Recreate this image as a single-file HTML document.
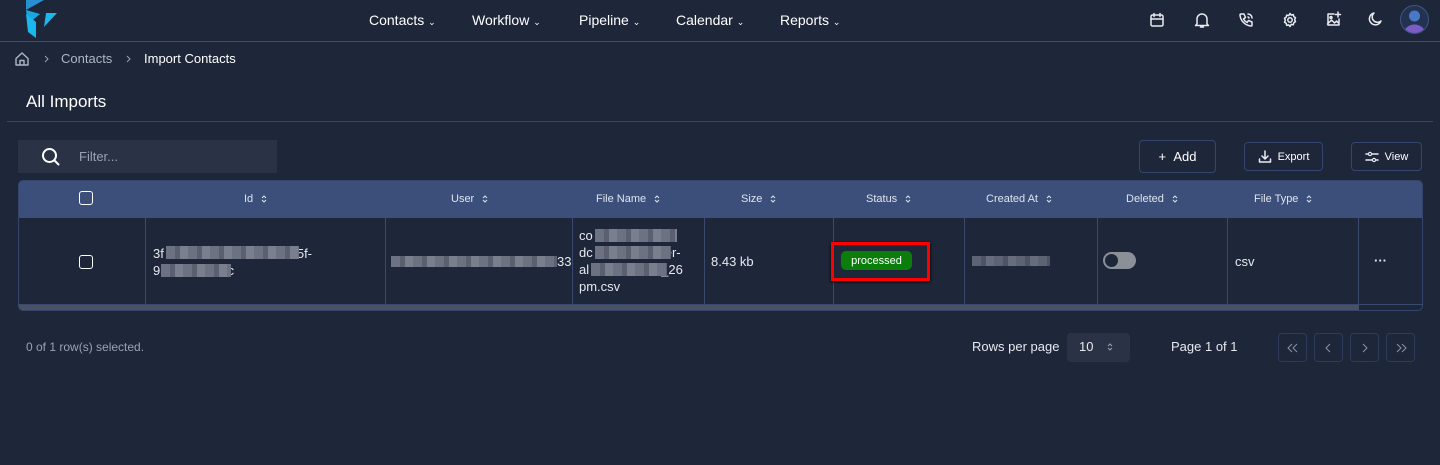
<!DOCTYPE html>
<html><head><style>
*{box-sizing:border-box;margin:0;padding:0}
body{width:1440px;height:465px;background:#1e2639;font-family:"Liberation Sans",sans-serif;color:#e6e9ef;position:relative;overflow:hidden;font-size:13px}
.a{position:absolute}
.nav{font-size:14px;color:#fff}
.ic{stroke:#e8ebf0;fill:none;stroke-width:1.5;stroke-linecap:round;stroke-linejoin:round}
.hd{font-size:11px;color:#dfe4ee;display:flex;align-items:center}
.hd svg{margin-left:8px}
.col{position:absolute;top:217px;height:87px;border-left:1px solid #3a4a6e}
.blur{position:absolute;height:10px;background:repeating-linear-gradient(90deg,#6c7282 0 9px,#5a6070 9px 14px,#7a7f8e 14px 22px)}
.btn{position:absolute;border:1px solid #34466e;border-radius:4px;font-size:13px;color:#fff;display:flex;align-items:center;justify-content:center}
.pg{position:absolute;top:333px;width:29px;height:29px;border:1px solid #2e3b5a;border-radius:4px;display:flex;align-items:center;justify-content:center}
</style></head><body>
<svg class="a" style="left:24px;top:0" width="34" height="40" viewBox="0 0 34 40"><polygon points="2,0 20,0 2,10" fill="#2a8fd0"/><polygon points="2,10 16,14 4,24" fill="#1aa6e0"/><polygon points="2,14 12,22 12,38 4,32" fill="#19b8ef"/><polygon points="22,13 33,13 20,27" fill="#19b8ef"/></svg>
<div class="a nav" style="left:369px;top:12px">Contacts <span style="font-size:9px">&#8964;</span></div>
<div class="a nav" style="left:472px;top:12px">Workflow <span style="font-size:9px">&#8964;</span></div>
<div class="a nav" style="left:579px;top:12px">Pipeline <span style="font-size:9px">&#8964;</span></div>
<div class="a nav" style="left:676px;top:12px">Calendar <span style="font-size:9px">&#8964;</span></div>
<div class="a nav" style="left:780px;top:12px">Reports <span style="font-size:9px">&#8964;</span></div>
<svg class="a" style="left:1149px;top:12px" width="16" height="16" viewBox="0 0 16 16"><rect class="ic" x="2" y="3" width="12" height="11" rx="1.5"/><path class="ic" d="M2 7h12M5 1.5v3M11 1.5v3"/></svg>
<svg class="a" style="left:1194px;top:11px" width="16" height="18" viewBox="0 0 16 18"><path class="ic" d="M3 13V8a5 5 0 0 1 10 0v5l1.5 1.5h-13z M6.5 16h3"/></svg>
<svg class="a" style="left:1238px;top:12px" width="16" height="16" viewBox="0 0 16 16"><path class="ic" d="M3 2l3 0 1.5 3.5-2 1.5a8 8 0 0 0 3.5 3.5l1.5-2 3.5 1.5v3a1 1 0 0 1-1 1A12 12 0 0 1 2 3a1 1 0 0 1 1-1zM10 2a4 4 0 0 1 4 4M10 5a1.5 1.5 0 0 1 1 1"/></svg>
<svg class="a" style="left:1282px;top:12px" width="16" height="16" viewBox="0 0 16 16"><circle class="ic" cx="8" cy="8" r="2.2"/><path class="ic" d="M8 1.5l1.3 1.6 2-.5.5 2 1.7 1.2-.9 1.9.9 1.9-1.7 1.2-.5 2-2-.5L8 14.5l-1.3-1.6-2 .5-.5-2L2.5 10.1l.9-1.9-.9-1.9 1.7-1.2.5-2 2 .5z"/></svg>
<svg class="a" style="left:1325px;top:11px" width="17" height="17" viewBox="0 0 17 17"><path class="ic" d="M9 3H3v11h11V8M2.5 13l4-4 3 3 2-2 2.5 2.5M13 1v5M10.5 3.5h5"/><circle class="ic" cx="6" cy="6.5" r="1"/></svg>
<svg class="a" style="left:1366px;top:11px" width="17" height="17" viewBox="0 0 17 17"><path class="ic" d="M8 2a6 6 0 1 0 7 8A5 5 0 0 1 8 2z"/></svg>
<svg class="a" style="left:1400px;top:5px" width="29" height="29" viewBox="0 0 29 29"><defs><clipPath id="c"><circle cx="14.5" cy="14.5" r="13.5"/></clipPath></defs><circle cx="14.5" cy="14.5" r="14" fill="#243252" stroke="#3d5580"/><g clip-path="url(#c)"><circle cx="14.5" cy="11" r="5.5" fill="#4a78c8"/><ellipse cx="14.5" cy="27" rx="10" ry="7.5" fill="#7a5cc4"/></g></svg>
<div class="a" style="left:0;top:41px;width:1440px;height:1px;background:#3a4f78"></div>
<svg class="a" style="left:14px;top:51px" width="16" height="16" viewBox="0 0 16 16"><path d="M2 7.5L8 2l6 5.5V14H2z M6 14V9.5h4V14" fill="none" stroke="#aeb5c4" stroke-width="1.4" stroke-linejoin="round"/></svg>
<svg class="a" style="left:44px;top:55px" width="6" height="8" viewBox="0 0 6 8"><path d="M1 1l3 3-3 3" fill="none" stroke="#9aa1b2" stroke-width="1"/></svg>
<div class="a" style="left:61px;top:51px;color:#aeb5c4;font-size:13px">Contacts</div>
<svg class="a" style="left:126px;top:55px" width="6" height="8" viewBox="0 0 6 8"><path d="M1 1l3 3-3 3" fill="none" stroke="#9aa1b2" stroke-width="1"/></svg>
<div class="a" style="left:144px;top:51px;color:#fff;font-size:13px">Import Contacts</div>
<div class="a" style="left:26px;top:92px;font-size:17px;color:#fff">All Imports</div>
<div class="a" style="left:7px;top:121px;width:1426px;height:1px;background:#34466b"></div>
<div class="a" style="left:18px;top:140px;width:259px;height:33px;background:#2a3346"></div>
<svg class="a" style="left:41px;top:147px" width="20" height="20" viewBox="0 0 20 20"><circle cx="8.5" cy="8.5" r="6.5" fill="none" stroke="#fff" stroke-width="2"/><path d="M13.5 13.5l4 4" stroke="#fff" stroke-width="2" stroke-linecap="round"/></svg>
<div class="a" style="left:79px;top:149px;color:#9aa1b2;font-size:13px">Filter...</div>
<div class="btn" style="left:1139px;top:140px;width:77px;height:33px">+&nbsp;&nbsp;Add</div>
<div class="btn" style="left:1244px;top:142px;width:79px;height:29px;font-size:11px"><svg width="14" height="14" viewBox="0 0 14 14" style="margin-right:6px"><path class="ic" d="M7 1v8M4 6l3 3 3-3M1.5 9v3h11V9"/></svg>Export</div>
<div class="btn" style="left:1351px;top:142px;width:71px;height:29px;font-size:11px"><svg width="14" height="14" viewBox="0 0 14 14" style="margin-right:6px"><path class="ic" d="M1 4h12M1 10h12"/><circle cx="5" cy="4" r="1.6" fill="#1e2639" stroke="#e8ebf0" stroke-width="1.2"/><circle cx="9" cy="10" r="1.6" fill="#1e2639" stroke="#e8ebf0" stroke-width="1.2"/></svg>View</div>
<div class="a" style="left:18px;top:180px;width:1405px;height:131px;border-radius:5px;background:#1e2639;border:1px solid #34466b;overflow:hidden">
<div class="a" style="left:0;top:0;width:1405px;height:37px;background:#3b4f7a"></div>
<div class="a" style="left:0;top:123px;width:1340px;height:7px;background:#4b5162"></div>
</div>
<div class="a" style="left:79px;top:191px;width:14px;height:14px;border:1.5px solid #fff;border-radius:3px"></div>
<div class="a hd" style="left:244px;top:193px">Id<svg width="6" height="10" viewBox="0 0 6 10"><path d="M1 4l2-2 2 2M1 6l2 2 2-2" fill="none" stroke="#dfe4ee" stroke-width="1"/></svg></div>
<div class="a hd" style="left:451px;top:193px">User<svg width="6" height="10" viewBox="0 0 6 10"><path d="M1 4l2-2 2 2M1 6l2 2 2-2" fill="none" stroke="#dfe4ee" stroke-width="1"/></svg></div>
<div class="a hd" style="left:596px;top:193px">File Name<svg width="6" height="10" viewBox="0 0 6 10"><path d="M1 4l2-2 2 2M1 6l2 2 2-2" fill="none" stroke="#dfe4ee" stroke-width="1"/></svg></div>
<div class="a hd" style="left:741px;top:193px">Size<svg width="6" height="10" viewBox="0 0 6 10"><path d="M1 4l2-2 2 2M1 6l2 2 2-2" fill="none" stroke="#dfe4ee" stroke-width="1"/></svg></div>
<div class="a hd" style="left:866px;top:193px">Status<svg width="6" height="10" viewBox="0 0 6 10"><path d="M1 4l2-2 2 2M1 6l2 2 2-2" fill="none" stroke="#dfe4ee" stroke-width="1"/></svg></div>
<div class="a hd" style="left:986px;top:193px">Created At<svg width="6" height="10" viewBox="0 0 6 10"><path d="M1 4l2-2 2 2M1 6l2 2 2-2" fill="none" stroke="#dfe4ee" stroke-width="1"/></svg></div>
<div class="a hd" style="left:1126px;top:193px">Deleted<svg width="6" height="10" viewBox="0 0 6 10"><path d="M1 4l2-2 2 2M1 6l2 2 2-2" fill="none" stroke="#dfe4ee" stroke-width="1"/></svg></div>
<div class="a hd" style="left:1254px;top:193px">File Type<svg width="6" height="10" viewBox="0 0 6 10"><path d="M1 4l2-2 2 2M1 6l2 2 2-2" fill="none" stroke="#dfe4ee" stroke-width="1"/></svg></div>
<div class="col" style="left:145px"></div><div class="col" style="left:385px"></div><div class="col" style="left:572px"></div><div class="col" style="left:704px"></div><div class="col" style="left:833px"></div><div class="col" style="left:964px"></div><div class="col" style="left:1097px"></div><div class="col" style="left:1227px"></div><div class="col" style="left:1358px"></div>
<div class="a" style="left:18px;top:304px;width:1405px;height:1px;background:#3a4a6e"></div>
<div class="a" style="left:79px;top:255px;width:14px;height:14px;border:1.5px solid #fff;border-radius:3px"></div>
<div class="a" style="left:153px;top:245px;line-height:17px;font-size:13px">3f<span style="display:inline-block;width:133px"></span>5f-<br>9<span style="display:inline-block;width:60px"></span>ec</div>
<div class="blur" style="left:166px;top:246px;width:133px;height:13px"></div><div class="blur" style="left:161px;top:264px;width:70px;height:13px"></div>
<div class="blur" style="left:391px;top:256px;width:166px;height:11px"></div><div class="a" style="left:557px;top:254px">33</div>
<div class="a" style="left:579px;top:227px;line-height:17px">co<br>dc<span style="display:inline-block;width:72px"></span>er-<br>al<span style="display:inline-block;width:72px"></span>_26<br>pm.csv</div>
<div class="blur" style="left:595px;top:229px;width:82px;height:13px"></div><div class="blur" style="left:595px;top:246px;width:76px;height:13px"></div><div class="blur" style="left:591px;top:263px;width:76px;height:13px"></div>
<div class="a" style="left:711px;top:254px">8.43 kb</div>
<div class="a" style="left:831px;top:242px;width:99px;height:39px;border:3px solid #ff0000;box-shadow:0 1px 3px #000"></div>
<div class="a" style="left:841px;top:251px;width:71px;height:19px;background:#0a7d0a;border-radius:5px;color:#fff;font-size:11px;display:flex;align-items:center;justify-content:center">processed</div>
<div class="blur" style="left:972px;top:256px;width:78px;opacity:.8"></div>
<div class="a" style="left:1103px;top:252px;width:33px;height:17px;border-radius:9px;background:#8b8f98"></div><div class="a" style="left:1105px;top:254px;width:13px;height:13px;border-radius:50%;background:#1e2639"></div>
<div class="a" style="left:1235px;top:254px">csv</div>
<div class="a" style="left:1374px;top:253px;font-weight:bold">···</div>
<div class="a" style="left:26px;top:340px;color:#9aa1b2;font-size:12px">0 of 1 row(s) selected.</div>
<div class="a" style="left:972px;top:339px;font-size:13px">Rows per page</div>
<div class="a" style="left:1067px;top:333px;width:63px;height:29px;background:#2a3346;border-radius:4px;font-size:13px;padding:6px 0 0 12px">10<svg style="position:absolute;left:40px;top:9px" width="6" height="10" viewBox="0 0 6 10"><path d="M1 4l2-2 2 2M1 6l2 2 2-2" fill="none" stroke="#9aa1b2" stroke-width="1"/></svg></div>
<div class="a" style="left:1171px;top:339px;font-size:13px">Page 1 of 1</div>
<div class="pg" style="left:1278px"><svg width="12" height="10" viewBox="0 0 12 10"><path d="M5 1L1 5l4 4M10 1L6 5l4 4" fill="none" stroke="#8a93a8" stroke-width="1"/></svg></div>
<div class="pg" style="left:1314px"><svg width="8" height="10" viewBox="0 0 8 10"><path d="M5 1L1 5l4 4" fill="none" stroke="#8a93a8" stroke-width="1"/></svg></div>
<div class="pg" style="left:1350px"><svg width="8" height="10" viewBox="0 0 8 10"><path d="M2 1l4 4-4 4" fill="none" stroke="#8a93a8" stroke-width="1"/></svg></div>
<div class="pg" style="left:1386px"><svg width="12" height="10" viewBox="0 0 12 10"><path d="M2 1l4 4-4 4M7 1l4 4-4 4" fill="none" stroke="#8a93a8" stroke-width="1"/></svg></div>
</body></html>
